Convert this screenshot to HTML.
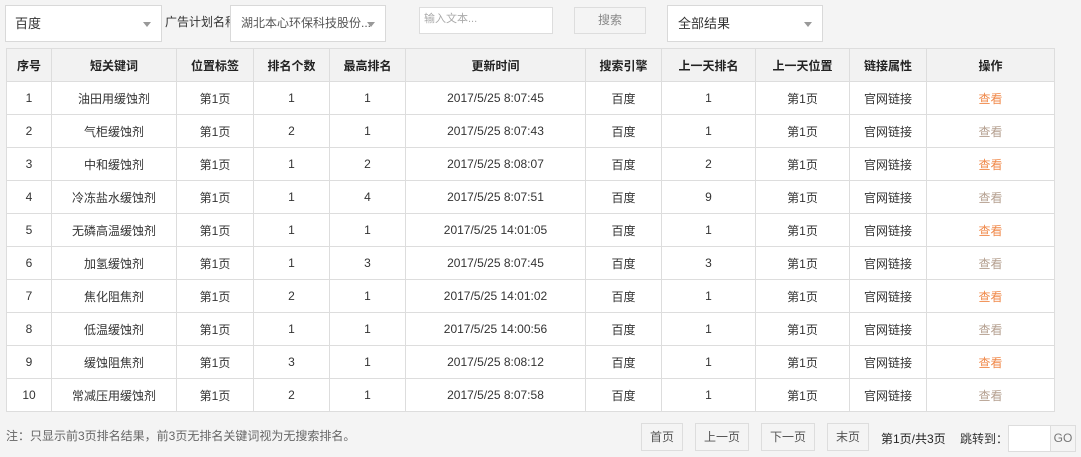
<!DOCTYPE html><html><head><meta charset="utf-8"><style>
*{box-sizing:border-box;margin:0;padding:0}
body{width:1081px;height:457px;background:#f4f4f4;font-family:"Liberation Sans","Noto Sans CJK SC",sans-serif;font-size:12px;color:#333;position:relative;overflow:hidden}
.a{position:absolute}
.sel{background:#fff;border:1px solid #d9d9d9;height:37px;top:5px;line-height:35px;padding-left:9px;font-size:13px}
.sel:after{content:"";position:absolute;right:10px;top:16px;border:4px solid transparent;border-top:5px solid #999}
table{position:absolute;left:6px;top:48px;border-collapse:collapse;background:#fff;table-layout:fixed;width:1048px}
td,th{border:1px solid #ddd;text-align:center;height:33px;font-size:12px}
th{background:#f2f2f2;font-weight:bold;color:#222}
.v{color:#f08a4b}.g{color:#b5a090}
.btn{top:423px;height:28px;border:1px solid #ddd;line-height:26px;text-align:center;color:#555}
</style></head><body>
<div class="a sel" style="left:5px;width:157px">百度</div>
<div class="a" style="left:165px;top:13px;width:73px;overflow:hidden;white-space:nowrap;font-size:12px">广告计划名称</div>
<div class="a sel" style="left:230px;width:156px;padding-left:10px;font-size:12px;color:#555">湖北本心环保科技股份...</div>
<div class="a" style="left:433px;top:7px;width:134px;height:27px;background:#fff;border:1px solid #ddd;line-height:22px;padding-left:4px;color:#aaa;font-size:11px;left:419px">输入文本...</div>
<div class="a" style="left:574px;top:7px;width:72px;height:27px;border:1px solid #ddd;line-height:25px;text-align:center;color:#888">搜索</div>
<div class="a sel" style="left:667px;width:156px;padding-left:10px">全部结果</div>
<table><colgroup><col style="width:45px"><col style="width:125px"><col style="width:77px"><col style="width:76px"><col style="width:76px"><col style="width:180px"><col style="width:76px"><col style="width:94px"><col style="width:94px"><col style="width:77px"><col style="width:128px"></colgroup>
<tr><th>序号</th><th>短关键词</th><th>位置标签</th><th>排名个数</th><th>最高排名</th><th>更新时间</th><th>搜索引擎</th><th>上一天排名</th><th>上一天位置</th><th>链接属性</th><th>操作</th></tr>
<tr><td>1</td><td>油田用缓蚀剂</td><td>第1页</td><td>1</td><td>1</td><td>2017/5/25 8:07:45</td><td>百度</td><td>1</td><td>第1页</td><td>官网链接</td><td class="v">查看</td></tr>
<tr><td>2</td><td>气柜缓蚀剂</td><td>第1页</td><td>2</td><td>1</td><td>2017/5/25 8:07:43</td><td>百度</td><td>1</td><td>第1页</td><td>官网链接</td><td class="g">查看</td></tr>
<tr><td>3</td><td>中和缓蚀剂</td><td>第1页</td><td>1</td><td>2</td><td>2017/5/25 8:08:07</td><td>百度</td><td>2</td><td>第1页</td><td>官网链接</td><td class="v">查看</td></tr>
<tr><td>4</td><td>冷冻盐水缓蚀剂</td><td>第1页</td><td>1</td><td>4</td><td>2017/5/25 8:07:51</td><td>百度</td><td>9</td><td>第1页</td><td>官网链接</td><td class="g">查看</td></tr>
<tr><td>5</td><td>无磷高温缓蚀剂</td><td>第1页</td><td>1</td><td>1</td><td>2017/5/25 14:01:05</td><td>百度</td><td>1</td><td>第1页</td><td>官网链接</td><td class="v">查看</td></tr>
<tr><td>6</td><td>加氢缓蚀剂</td><td>第1页</td><td>1</td><td>3</td><td>2017/5/25 8:07:45</td><td>百度</td><td>3</td><td>第1页</td><td>官网链接</td><td class="g">查看</td></tr>
<tr><td>7</td><td>焦化阻焦剂</td><td>第1页</td><td>2</td><td>1</td><td>2017/5/25 14:01:02</td><td>百度</td><td>1</td><td>第1页</td><td>官网链接</td><td class="v">查看</td></tr>
<tr><td>8</td><td>低温缓蚀剂</td><td>第1页</td><td>1</td><td>1</td><td>2017/5/25 14:00:56</td><td>百度</td><td>1</td><td>第1页</td><td>官网链接</td><td class="g">查看</td></tr>
<tr><td>9</td><td>缓蚀阻焦剂</td><td>第1页</td><td>3</td><td>1</td><td>2017/5/25 8:08:12</td><td>百度</td><td>1</td><td>第1页</td><td>官网链接</td><td class="v">查看</td></tr>
<tr><td>10</td><td>常减压用缓蚀剂</td><td>第1页</td><td>2</td><td>1</td><td>2017/5/25 8:07:58</td><td>百度</td><td>1</td><td>第1页</td><td>官网链接</td><td class="g">查看</td></tr>
</table>
<div class="a" style="left:6px;top:427px;color:#666">注：只显示前3页排名结果，前3页无排名关键词视为无搜索排名。</div>
<div class="a btn" style="left:641px;width:42px">首页</div>
<div class="a btn" style="left:695px;width:54px">上一页</div>
<div class="a btn" style="left:761px;width:54px">下一页</div>
<div class="a btn" style="left:827px;width:42px">末页</div>
<div class="a" style="left:881px;top:430px;color:#222">第1页/共3页</div>
<div class="a" style="left:960px;top:430px;color:#333">跳转到：</div>
<div class="a" style="left:1008px;top:425px;width:43px;height:27px;background:#fff;border:1px solid #ddd"></div>
<div class="a" style="left:1050px;top:425px;width:26px;height:27px;border:1px solid #ddd;line-height:25px;text-align:center;color:#777">GO</div>
</body></html>
